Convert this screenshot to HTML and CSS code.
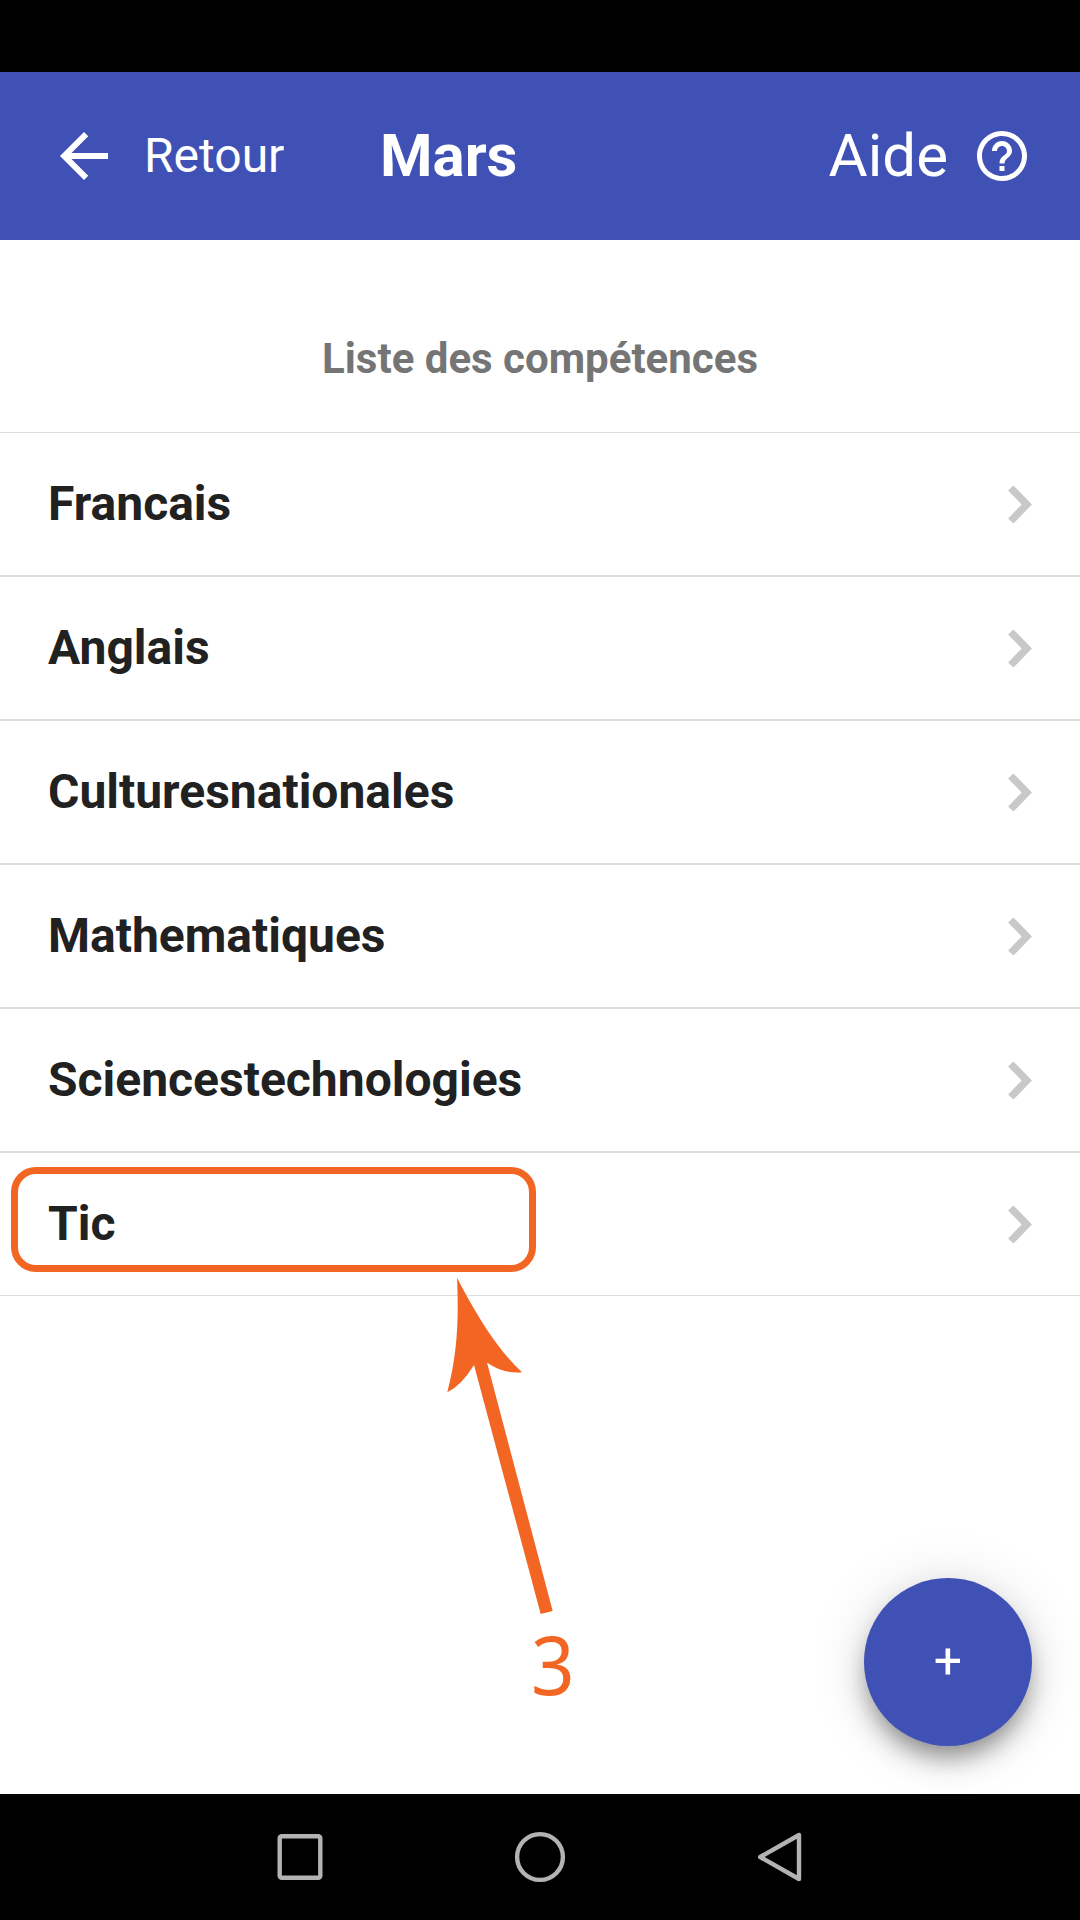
FILE: index.html
```html
<!DOCTYPE html>
<html lang="fr">
<head>
<meta charset="utf-8">
<title>Mars</title>
<link rel="stylesheet" href="styles.css">
</head>
<body>
<div class="screen">
  <div class="status-bar"></div>
  <header class="toolbar">
    <button class="back">
      <svg class="back-icon" viewBox="0 0 24 24"><path fill="currentColor" d="M20 11H7.830l5.590-5.590L12 4l-8 8 8 8 1.410-1.410L7.830 13H20v-2z"/></svg>
      <span class="toolbar-label">Retour</span>
    </button>
    <h1 class="title">Mars</h1>
    <button class="help">
      <span class="toolbar-label">Aide</span>
      <svg class="help-icon" viewBox="0 0 24 24"><path fill="currentColor" d="M11 18h2v-2h-2v2zm1-16C6.480 2 2 6.480 2 12s4.480 10 10 10 10-4.480 10-10S17.520 2 12 2zm0 18c-4.410 0-8-3.590-8-8s3.590-8 8-8 8 3.590 8 8-3.590 8-8 8zm0-14c-2.210 0-4 1.790-4 4h2c0-1.100.9-2 2-2s2 .9 2 2c0 2-3 1.750-3 5h2c0-2.250 3-2.500 3-5 0-2.210-1.790-4-4-4z"/></svg>
    </button>
  </header>
  <main class="content">
    <h2 class="list-header">Liste des compétences</h2>
    <ul class="list">
      <li class="item"><span class="item-label">Francais</span><svg class="chevron" viewBox="0 0 24 39"><path d="M2.800 3 18.800 19.500 2.800 36"/></svg></li>
      <li class="item"><span class="item-label">Anglais</span><svg class="chevron" viewBox="0 0 24 39"><path d="M2.800 3 18.800 19.500 2.800 36"/></svg></li>
      <li class="item"><span class="item-label">Culturesnationales</span><svg class="chevron" viewBox="0 0 24 39"><path d="M2.800 3 18.800 19.500 2.800 36"/></svg></li>
      <li class="item"><span class="item-label">Mathematiques</span><svg class="chevron" viewBox="0 0 24 39"><path d="M2.800 3 18.800 19.500 2.800 36"/></svg></li>
      <li class="item"><span class="item-label">Sciencestechnologies</span><svg class="chevron" viewBox="0 0 24 39"><path d="M2.800 3 18.800 19.500 2.800 36"/></svg></li>
      <li class="item"><span class="item-label">Tic</span><svg class="chevron" viewBox="0 0 24 39"><path d="M2.800 3 18.800 19.500 2.800 36"/></svg></li>
    </ul>
    <button class="fab">+</button>
    <div class="callout-box"></div>
    <svg class="callout-arrow" viewBox="0 0 110 340"><path d="M11 .8C32 41 52 73 76 95.300Q57 97 41 85.500L106.700 334 94.700 337 28 88Q15 109 1.300 115.300C11 78 13 45 11 .8Z"/></svg>
    <span class="callout-number">3</span>
  </main>
  <nav class="nav-bar">
    <svg class="nav-icon" viewBox="0 0 60 60"><rect x="9.700" y="9.200" width="40.600" height="41.600" rx="2"/></svg>
    <svg class="nav-icon" viewBox="0 0 60 60"><circle cx="30" cy="30" r="22.900"/></svg>
    <svg class="nav-icon" viewBox="0 0 60 60"><path d="M49 8V52L10.200 30Z"/></svg>
  </nav>
</div>
</body>
</html>
```
FILE: styles.css
```css
* {
  box-sizing: border-box;
}

body {
  margin: 0;
  font-family: Roboto, sans-serif;
  background: #fff;
}

button {
  padding: 0;
  border: 0;
  background: none;
  color: inherit;
  font: inherit;
}

.screen {
  display: flex;
  flex-direction: column;
  width: 1080px;
  height: 1920px;
  overflow: hidden;
}

.status-bar {
  height: 72px;
  background: #000;
}

.toolbar {
  display: flex;
  align-items: center;
  height: 168px;
  padding: 0 48px;
  background: #4051b5;
  color: #fff;
}

.toolbar-label {
  padding-bottom: 2px;
}

.back {
  display: flex;
  align-items: center;
  gap: 24px;
  width: 332px;
  font-size: 48px;
}

.back-icon {
  width: 72px;
  height: 72px;
}

.title {
  flex: 1;
  margin: 0;
  font-size: 60px;
  font-weight: 700;
  line-height: 72px;
}

.help {
  display: flex;
  align-items: center;
  gap: 24px;
  font-size: 60px;
}

.help-icon {
  width: 60px;
  height: 60px;
}

.content {
  position: relative;
  flex: 1;
  overflow: hidden;
}

.list-header {
  height: 192px;
  margin: 0;
  padding-top: 47px;
  color: #757575;
  font-size: 42px;
  font-weight: 700;
  line-height: 144px;
  text-align: center;
}

.list {
  margin: 0;
  padding: 0;
  border-top: 1px solid #dedede;
  list-style: none;
}

.item {
  display: flex;
  align-items: center;
  justify-content: space-between;
  height: 144px;
  padding: 0 48px;
  border-bottom: 2px solid #dedede;
  color: #212121;
  font-size: 48px;
  font-weight: 700;
}

.item-label {
  padding-bottom: 2px;
}

.item:last-child {
  height: 143px;
  border-bottom-width: 1px;
}

.chevron {
  width: 24px;
  height: 39px;
  fill: none;
  stroke: #c8c8c8;
  stroke-width: 7.5;
}

.fab {
  position: absolute;
  right: 48px;
  bottom: 48px;
  width: 168px;
  height: 168px;
  padding-bottom: 2px;
  border-radius: 50%;
  background: #4051b5;
  box-shadow: 0 15px 21px -6px rgba(0, 0, 0, .3), 0 15px 30px 0 rgba(0, 0, 0, .16), 0 3px 60px 0 rgba(0, 0, 0, .12);
  color: #fff;
  font-size: 50px;
}

.callout-box {
  position: absolute;
  top: 927px;
  left: 11px;
  width: 525px;
  height: 105px;
  border: 7px solid #f26522;
  border-radius: 25px;
}

.callout-arrow {
  position: absolute;
  top: 1037px;
  left: 446px;
  width: 110px;
  height: 340px;
  fill: #f26522;
}

.callout-number {
  position: absolute;
  top: 1373px;
  left: 531px;
  color: #f26522;
  font: 83px/100px "Noto Sans", sans-serif;
  transform: scaleX(.92);
  transform-origin: left;
}

.nav-bar {
  display: flex;
  align-items: center;
  justify-content: center;
  gap: 180px;
  height: 126px;
  background: #000;
}

.nav-icon {
  width: 60px;
  height: 60px;
  fill: none;
  stroke: #b3b3b3;
  stroke-width: 4.4;
  stroke-linejoin: round;
}
```
